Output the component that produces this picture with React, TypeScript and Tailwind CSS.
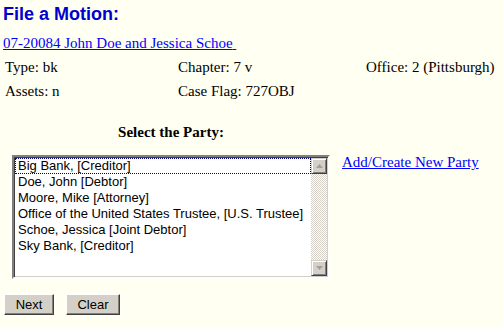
import React from "react";

const parties = [
  "Big Bank, [Creditor]",
  "Doe, John [Debtor]",
  "Moore, Mike [Attorney]",
  "Office of the United States Trustee, [U.S. Trustee]",
  "Schoe, Jessica [Joint Debtor]",
  "Sky Bank, [Creditor]",
];

function Arrow({ up }: { up?: boolean }) {
  return (
    <div className="w-[16px] h-[16px] bg-[#d4d0c8] border border-t-[#d4d0c8] border-l-[#d4d0c8] border-r-[#404040] border-b-[#404040] shadow-[inset_1px_1px_0_#fff,inset_-1px_-1px_0_#808080] flex items-center justify-center">
      <svg width="7" height="4" viewBox="0 0 7 4">
        {up ? (
          <polygon points="3.5,0 7,4 0,4" fill="#a0a0a0" />
        ) : (
          <polygon points="0,0 7,0 3.5,4" fill="#a0a0a0" />
        )}
      </svg>
    </div>
  );
}

export default function App() {
  return (
    <div className="min-h-screen bg-[#fffff2] text-black font-['Liberation_Serif',serif] text-[15px]">
      <h1 className="pl-[3px] pt-[3px] font-['Liberation_Sans',Arial,sans-serif] font-bold text-[18px] leading-[22px] text-[#0000cc]">
        File a Motion:
      </h1>

      <div className="pl-[3px] mt-[10px] leading-[17px]">
        <a href="#" className="text-[#0000ff] underline">
          07-20084 John Doe and Jessica Schoe{"\u00a0"}
        </a>
      </div>

      <div className="grid grid-cols-[173px_188px_1fr] pl-[5px] mt-[7px] leading-[17px] gap-y-[7px]">
        <div>Type: bk</div>
        <div>Chapter: 7 v</div>
        <div>Office: 2 (Pittsburgh)</div>
        <div>Assets: n</div>
        <div>Case Flag: 727OBJ</div>
        <div></div>
      </div>

      <div className="flex items-start mt-[24px] pl-[12px]">
        <div className="w-[318px]">
          <div className="text-center font-bold leading-[17px]">Select the Party:</div>
          <div className="mt-[14px] h-[124px] flex border-2 border-t-[#808080] border-l-[#808080] border-r-[#ffffff] border-b-[#ffffff] shadow-[inset_1px_1px_0_#404040,inset_-1px_-1px_0_#d4d0c8] bg-white">
            <div className="flex-1 pt-[1px] pl-[1px] font-['Liberation_Sans',Arial,sans-serif] text-[13px] leading-[16px]">
              {parties.map((p, i) => (
                <div
                  key={p}
                  className={
                    i === 0
                      ? "h-[16px] pl-[3px] outline-1 outline-dotted outline-[#000080] -outline-offset-1"
                      : "h-[16px] pl-[3px]"
                  }
                >
                  {p}
                </div>
              ))}
            </div>
            <div className="w-[16px] my-[1px] mr-[1px] flex flex-col bg-[repeating-conic-gradient(#d4d0c8_0_25%,#ffffff_0_50%)] bg-[length:2px_2px]">
              <Arrow up />
              <div className="flex-1" />
              <Arrow />
            </div>
          </div>
        </div>
        <a href="#" className="ml-[12px] mt-[30px] leading-[17px] text-[#0000ff] underline">
          Add/Create New Party
        </a>
      </div>

      <div className="flex gap-[12px] pl-[4px] mt-[15px] font-['Liberation_Sans',Arial,sans-serif] text-[13px]">
        <button className="w-[50px] h-[21px] bg-[#d4d0c8] border border-t-[#ffffff] border-l-[#ffffff] border-r-[#404040] border-b-[#404040] shadow-[inset_-1px_-1px_0_#808080]">
          Next
        </button>
        <button className="w-[54px] h-[21px] bg-[#d4d0c8] border border-t-[#ffffff] border-l-[#ffffff] border-r-[#404040] border-b-[#404040] shadow-[inset_-1px_-1px_0_#808080]">
          Clear
        </button>
      </div>
    </div>
  );
}
